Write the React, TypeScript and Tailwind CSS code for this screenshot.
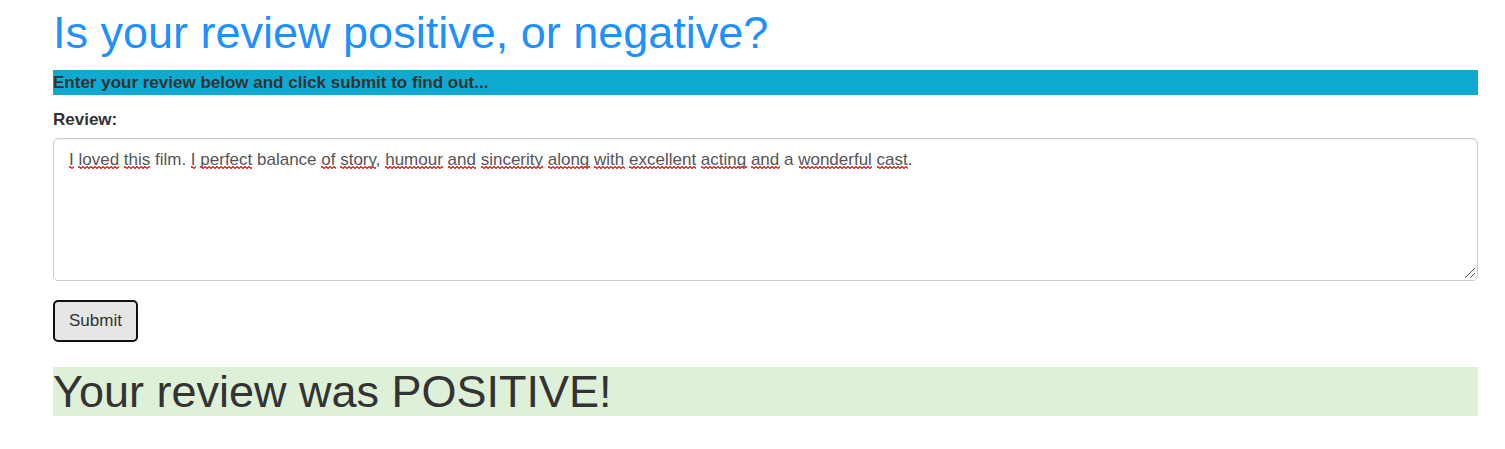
import { useState, type FormEvent } from "react";

const initialReview =
  "I loved this film. I perfect balance of story, humour and sincerity along with excellent acting and a wonderful cast.";

const knownWords = new Set(["film", "balance", "a"]);

// Three one-pixel rows on a four-pixel period form the zigzag under a word.
const squiggle =
  "bg-[linear-gradient(90deg,#ff4040_2px,transparent_2px),linear-gradient(90deg,#ff3030_4px,#ff3030_4px),linear-gradient(90deg,transparent_2px,#ff4040_2px)] bg-[length:4px_1px] bg-[position:0_calc(100%-2px),0_calc(100%-1px),0_100%] bg-repeat-x";

function SpellingMarks({ text }: { text: string }) {
  const parts = text.split(/([A-Za-z]+)/);
  return (
    <div
      aria-hidden="true"
      className="pointer-events-none absolute inset-0 overflow-hidden border border-transparent px-[15px] py-2 leading-[25px] break-words whitespace-pre-wrap text-transparent select-none"
    >
      {parts.map((part, i) =>
        i % 2 === 1 && !knownWords.has(part) ? (
          <span key={i} className={squiggle}>
            {part}
          </span>
        ) : (
          part
        ),
      )}
    </div>
  );
}

function ResizeGrip() {
  return (
    <svg
      aria-hidden="true"
      viewBox="0 0 14 14"
      className="pointer-events-none absolute right-px bottom-px size-[14px] rounded-br-[4px] bg-white"
      fill="none"
      stroke="#555555"
      strokeWidth="1"
      strokeLinecap="square"
    >
      <path d="M2.5 11.5 11.5 2.5M7.5 11.5 11.5 7.5" />
    </svg>
  );
}

export default function App() {
  const [review, setReview] = useState(initialReview);
  const [result, setResult] = useState("POSITIVE");

  const submit = (event: FormEvent) => {
    event.preventDefault();
    const negative = /\b(bad|hated?|awful|terrible|boring)\b/i.test(review);
    setResult(negative ? "NEGATIVE" : "POSITIVE");
  };

  return (
    <main className="bg-white pt-2 pr-[27px] pb-8 pl-[53px] font-['Liberation_Sans',Arial,sans-serif] text-[17px] leading-[25px] text-[#333333]">
      <h1 className="text-[45px] leading-[49px] text-[#1e90ff]">
        Is your review positive, or negative?
      </h1>
      <p className="mt-[13px] bg-[#10a9d0] font-bold">
        Enter your review below and click submit to find out...
      </p>
      <form onSubmit={submit} className="mt-3">
        <label htmlFor="review" className="block font-bold">
          Review:
        </label>
        <div className="relative mt-[6px]">
          <textarea
            id="review"
            rows={5}
            spellCheck={false}
            value={review}
            onChange={(event) => setReview(event.target.value)}
            className="block w-full resize-y rounded-[5px] border border-[#cccccc] bg-white px-[15px] py-2 leading-[25px] text-[#555555] shadow-[inset_0_1px_1px_rgba(0,0,0,0.075)] outline-none"
          />
          <SpellingMarks text={review} />
          <ResizeGrip />
        </div>
        <button
          type="submit"
          className="mt-[19px] block rounded-[5px] border-2 border-[#101010] bg-[#e6e6e6] px-[14px] py-[6px] leading-[26px] text-[#333333]"
        >
          Submit
        </button>
      </form>
      <h2 className="mt-[25px] bg-[#dff0d8] text-[45px] leading-[49px]">
        Your review was {result}!
      </h2>
    </main>
  );
}
